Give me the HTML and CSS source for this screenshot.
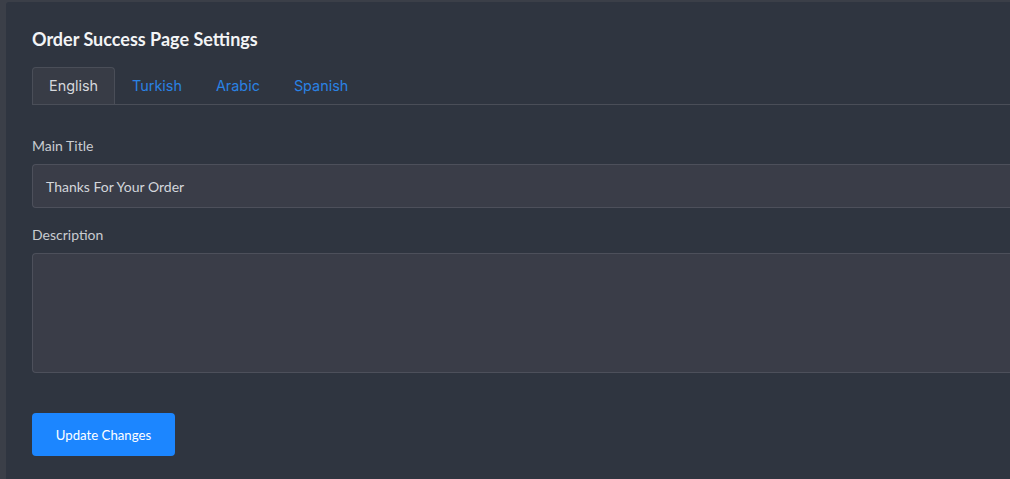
FILE: index.html
```html
<!DOCTYPE html>
<html>
<head>
<meta charset="utf-8">
<link rel="stylesheet" href="styles.css">
</head>
<body>
<div class="card">
  <h2 class="title">Order Success Page Settings</h2>
  <ul class="tabs">
    <li class="tab active">English</li>
    <li class="tab">Turkish</li>
    <li class="tab">Arabic</li>
    <li class="tab">Spanish</li>
  </ul>
  <div class="group first">
    <label class="label">Main Title</label>
    <div class="input">Thanks For Your Order</div>
  </div>
  <div class="group">
    <label class="label">Description</label>
    <div class="input textarea"></div>
  </div>
  <button class="btn">Update Changes</button>
</div>
</body>
</html>
```
FILE: styles.css
```css
html, body {
  margin: 0;
  padding: 0;
  height: 100%;
  overflow: hidden;
}
body {
  background: #3b3f48;
  font-family: "Lato", "Liberation Sans", sans-serif;
  padding: 2px 0 0 6px;
  box-sizing: border-box;
}
.card {
  box-sizing: border-box;
  width: 100%;
  height: 100%;
  background: #2f3540;
  border-top-left-radius: 3px;
  padding: 25px 0 0 26px;
}
.title {
  margin: 0;
  font-size: 18px;
  line-height: 24px;
  font-weight: 700;
  color: #f3f4f6;
}
.tabs {
  list-style: none;
  margin: 16px 0 0 0;
  padding: 0;
  display: flex;
  border-bottom: 1px solid #4a4e58;
}
.tab {
  box-sizing: border-box;
  height: 37px;
  display: flex;
  align-items: center;
  padding: 0 16px 1px;
  font-family: "Inter", "DejaVu Sans", sans-serif;
  font-size: 14.4px;
  color: #2a82e4;
  border: 1px solid transparent;
  border-bottom: 0;
  border-radius: 4px 4px 0 0;
}
.tab.active {
  color: #d6d8dc;
  background: #383c46;
  border-color: #4a4e58;
}
.group {
  margin-top: 17px;
}
.group.first {
  margin-top: 31px;
}
.label {
  display: block;
  font-size: 14px;
  line-height: 20px;
  color: #c9ccd1;
  margin-bottom: 8px;
}
.input {
  box-sizing: border-box;
  height: 44px;
  background: #3a3d48;
  border: 1px solid #4d505b;
  border-right: 0;
  border-radius: 4px 0 0 4px;
  padding: 0 13px;
  display: flex;
  align-items: center;
  font-size: 14px;
  color: #d3d6db;
}
.textarea {
  height: 120px;
}
.btn {
  margin-top: 40px;
  width: 143px;
  height: 43px;
  background: #1c86ff;
  border: 0;
  border-radius: 4px;
  color: #ffffff;
  font-family: "Lato", "Liberation Sans", sans-serif;
  font-size: 13.2px;
  padding: 0;
}
```
